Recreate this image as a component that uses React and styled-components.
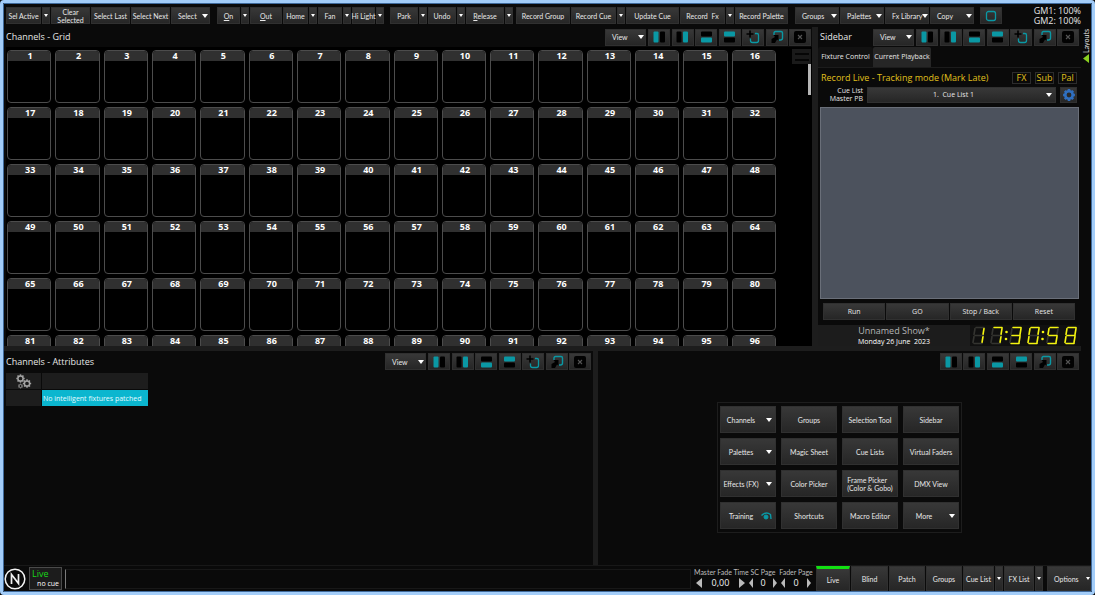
import React from "react";
import styled, { createGlobalStyle, css } from "styled-components";

const Global = createGlobalStyle`
  * { box-sizing: border-box; }
  html, body, #root { height: 100%; margin: 0; }
  body { background: #0a0a0a; color: #e6e6e6; font-family: "Open Sans", "Noto Sans", sans-serif; font-size: 7px; }
  button, select, input { font: inherit; color: inherit; margin: 0; }
  button { cursor: pointer; }
  h2 { margin: 0; font-weight: 400; }
`;

const Shell = styled.div`
  height: 100%;
  min-height: 480px;
  display: flex;
  flex-direction: column;
  border: 3px solid #a3cdf9;
  border-radius: 4px;
  outline: 1px solid #3f6a9c;
  outline-offset: -4px;
  padding: 1px;
  overflow: hidden;
`;

const Toolbar = styled.header`
  display: flex;
  align-items: center;
  flex: none;
  height: 23px;
  padding: 0 10px 0 2px;
`;

const Group = styled.div`
  display: flex;
  gap: 1px;
  margin-right: ${(p) => p.$after || 0}px;
`;

const face = css`
  background: linear-gradient(#383838, #262626);
  border: 1px solid #303030;
  color: #e8e8e8;
  font-family: Lato, "Open Sans", sans-serif;
  font-size: 7px;
  line-height: 8px;
  padding: 0;
`;

const Button = styled.button`
  ${face}
  width: ${(p) => p.$w}px;
  height: ${(p) => p.$h || 17}px;
  display: flex;
  align-items: center;
  justify-content: ${(p) => (p.$menu ? "space-between" : "center")};
  padding: ${(p) => (p.$menu ? "0 1px 0 6px" : "0")};
  text-align: center;
  flex: none;
  white-space: pre;
`;

const Caret = styled.span`
  width: 0;
  height: 0;
  flex: none;
  border: ${(p) => (p.$small ? 2 : 3)}px solid transparent;
  border-top: ${(p) => (p.$small ? 3 : 4)}px solid #fff;
  border-bottom: 0;
`;

const Masters = styled.div`
  margin-left: auto;
  font-size: 9px;
  line-height: 10px;
  text-align: right;
  white-space: pre;
`;

const Upper = styled.div`
  flex: 319 1 0;
  min-height: 0;
  display: flex;
`;

const Lower = styled.div`
  flex: 214 1 0;
  min-height: 0;
  display: flex;
`;

const Divider = styled.div`
  height: 5px;
  flex: none;
  background: #1d1d1d;
  margin-right: 10px;
`;

const Panel = styled.section`
  flex: ${(p) => p.$share} 1 0;
  min-width: 0;
  display: flex;
  flex-direction: column;
`;

const PanelHead = styled.div`
  display: flex;
  align-items: center;
  gap: 2px;
  height: ${(p) => p.$h || 20}px;
  flex: none;
  padding: 0 ${(p) => p.$right || 0}px 0 2px;
`;

const Title = styled.h2`
  font-size: 9px;
  line-height: 12px;
  margin-right: auto;
  white-space: nowrap;
`;

const ToolSet = styled.div`
  width: ${(p) => p.$w}px;
  flex: none;
  display: flex;
  justify-content: space-between;
`;

const ToolButton = styled.button`
  ${face}
  width: 22px;
  height: 17px;
  display: grid;
  place-items: center;
  flex: none;
`;

const GridBody = styled.div`
  flex: 1;
  min-height: 0;
  display: flex;
  background: #000;
  margin-left: 2px;
  overflow: hidden;
`;

const Channels = styled.div`
  flex: 1;
  display: grid;
  grid-template-columns: repeat(16, 1fr);
  grid-auto-rows: 53px;
  gap: 4px;
  padding: 3px 16px 0 1px;
`;

const Channel = styled.div`
  border: 1px solid #4c4c4c;
  border-radius: 4px;
  overflow: hidden;
`;

const ChannelNumber = styled.div`
  background: #303030;
  font-size: 9px;
  line-height: 10px;
  font-weight: 700;
  text-align: center;
  padding-left: 2px;
  color: #fff;
`;

const Rail = styled.div`
  width: 20px;
  flex: none;
  display: flex;
  flex-direction: column;
  align-items: flex-end;
  padding: 2px 1px 0 0;
`;

const Grip = styled.button`
  width: 19px;
  height: 15px;
  border: 0;
  padding: 0;
  background: #1a1a1a;
  display: grid;
  place-items: center;
`;

const Thumb = styled.div`
  width: 3px;
  height: 31px;
  background: #b5b5b5;
`;

const Splitter = styled.div`
  width: ${(p) => p.$w || 5}px;
  flex: none;
  background: #1d1d1d;
`;

const Sidebar = styled.aside`
  flex: 263 1 0;
  min-width: 0;
  display: flex;
  flex-direction: column;
`;

const Tabs = styled.div`
  display: flex;
  align-items: flex-end;
  height: 20px;
  flex: none;
`;

const Tab = styled.button`
  height: 20px;
  width: ${(p) => p.$w}px;
  border: 0;
  padding: 0;
  font-size: 7px;
  line-height: 10px;
  white-space: nowrap;
  border-radius: 2px 2px 0 0;
  background: ${(p) => (p.$on ? "#262626" : "#111")};
`;

const Mode = styled.div`
  display: flex;
  align-items: center;
  gap: 4px;
  height: 20px;
  flex: none;
  border-top: 1px solid #1c1c1c;
  padding: 0 4px 0 3px;
  color: #e0c01c;
`;

const ModeText = styled.span`
  font-size: 9px;
  line-height: 12px;
  margin-right: auto;
  white-space: nowrap;
`;

const ModeFlag = styled.button`
  width: 19px;
  height: 12px;
  padding: 0;
  background: #0a0a0a;
  border: 1px solid #2c2c2c;
  font-size: 9px;
  line-height: 10px;
`;

const CueRow = styled.div`
  display: flex;
  align-items: flex-start;
  gap: 4px;
  height: 20px;
  flex: none;
  padding: 0 4px 0 3px;
`;

const CueLabel = styled.label`
  width: 42px;
  font-size: 7px;
  line-height: 8px;
  text-align: right;
`;

const SelectWrap = styled.div`
  flex: 1;
  display: flex;
  position: relative;
  align-items: center;

  & > span { position: absolute; right: 4px; pointer-events: none; }
`;

const Select = styled.select`
  ${face}
  font-family: "Open Sans", "Noto Sans", sans-serif;
  appearance: none;
  width: 100%;
  height: 16px;
  text-align: center;
  text-align-last: center;
  padding-right: 16px;
`;

const CueArea = styled.div`
  flex: 1;
  min-height: 0;
  margin: 0 2px 0 2px;
  background: #4c525d;
  border: 1px solid #6a6f79;
`;

const Transport = styled.div`
  display: flex;
  gap: 1px;
  padding: 4px 6px 5px 5px;
  flex: none;

  & > button { flex: 1; width: auto; font-family: "Open Sans", "Noto Sans", sans-serif; }
`;

const Status = styled.div`
  display: flex;
  height: 21px;
  flex: none;
  background: #1c1c1c;
  margin-right: 1px;
`;

const Show = styled.div`
  flex: 1;
  text-align: center;
  white-space: pre;
  font-size: 9px;
  line-height: 12px;
  color: #b4b4b4;

  & > time { display: block; font-size: 7px; line-height: 9px; color: #fff; }
`;

const Clock = styled.svg`
  width: 110px;
  height: 21px;
  background: #101010;
  flex: none;
`;

const Layouts = styled.button`
  width: 10px;
  flex: none;
  border: 0;
  padding: 2px 0 0;
  background: none;
  display: flex;
  flex-direction: column;
  align-items: center;
  font-size: 7px;
  line-height: 8px;
  gap: 1px;

  & > span { writing-mode: vertical-rl; transform: rotate(180deg); font-family: Lato, sans-serif; }
`;

const AttrTable = styled.table`
  border-collapse: separate;
  border-spacing: 1px;
  margin: 0 0 0 1px;
  width: 144px;
  table-layout: fixed;

  th, td { height: 16px; padding: 1px 0 0 1px; background: #1d1d1d; font-size: 7px; line-height: 10px; font-weight: 400; text-align: left; white-space: nowrap; }
  th:first-child { width: 35px; text-align: center; padding: 0; }
  td:last-child { background: #0bb6cf; color: #e4fbff; }
  svg { display: block; margin: 0 auto; }
`;

const Centre = styled.div`
  flex: 1;
  display: flex;
  align-items: center;
  justify-content: center;
  padding: 0 10px 2px 0;
`;

const Launcher = styled.div`
  display: grid;
  grid-template-columns: repeat(4, 56px);
  gap: 5px;
  padding: 3px 2px;
  border: 1px solid #1d1d1d;
  white-space: pre;

  & > button { width: 56px; height: 27px; position: relative; }
`;

const Labelled = styled.span`
  padding-right: ${(p) => (p.$shift ? 14 : 0)}px;
  text-align: left;
`;

const Mark = styled.span`
  position: absolute;
  right: 3px;
  top: 0;
  bottom: 0;
  display: flex;
  align-items: center;
`;

const CommandBar = styled.footer`
  display: flex;
  height: 26px;
  flex: none;
  align-items: center;
  border-top: 1px solid #181818;
`;

const LiveBox = styled.div`
  width: 33px;
  height: 23px;
  margin: 0 3px 0 3px;
  padding: 1px 2px;
  border: 1px solid #4a4a4a;
  background: #1c1c1c;
  font-size: 9px;
  line-height: 10px;
  color: #18d818;

  & > small { display: block; font-size: 7px; line-height: 9px; text-align: right; color: #fff; }
`;

const Command = styled.input`
  flex: 1;
  min-width: 0;
  height: 20px;
  padding: 0;
  background: #0a0a0a;
  border: 1px solid #181818;
  border-left: 1px solid #7a7a7a;
  margin-right: 3px;
`;

const Stepper = styled.div`
  width: ${(p) => p.$w}px;
  font-family: Lato, sans-serif;
  font-size: 7px;
  line-height: 8px;
  text-align: center;
  white-space: nowrap;
  color: #bcbcbc;
`;

const StepRow = styled.div`
  display: flex;
  align-items: center;
  justify-content: space-between;
  padding: 0 2px;
  font-family: "Open Sans", sans-serif;
  font-size: 9px;
  line-height: 13px;
  color: #f2f2f2;

  & > button { border: 0; padding: 0; background: none; display: flex; }
`;

const Views = styled.nav`
  display: flex;
  gap: 1px;
  height: 25px;
  margin-left: 3px;
`;

const ViewButton = styled.button`
  ${face}
  width: ${(p) => p.$w}px;
  display: flex;
  align-items: center;
  justify-content: ${(p) => (p.$menu ? "space-between" : "center")};
  padding: ${(p) => (p.$menu ? "0 0 0 6px" : "0")};
  border-top: ${(p) => (p.$on ? "3px solid #12e012" : "1px solid #303030")};
  margin-left: ${(p) => p.$gap || 0}px;
`;

const teal = "#0a98a4";

function Icon({ kind }) {
  if (kind === "left" || kind === "right") {
    const l = kind === "left";
    return (
      <svg width="13" height="12" viewBox="0 0 13 12">
        <rect x="0.5" y="0.5" width="5" height="11" rx="1" fill={l ? teal : "#000"} />
        <rect x="7" y="0.5" width="5" height="11" rx="1" fill={l ? "#000" : teal} />
      </svg>
    );
  }
  if (kind === "bottom" || kind === "top") {
    const t = kind === "top";
    return (
      <svg width="13" height="12" viewBox="0 0 13 12">
        <rect x="1" y="0.5" width="11" height="5" rx="1" fill={t ? teal : "#000"} />
        <rect x="1" y="6.5" width="11" height="5" rx="1" fill={t ? "#000" : teal} />
      </svg>
    );
  }
  if (kind === "add") {
    return (
      <svg width="14" height="14" viewBox="0 0 14 14" fill="none">
        <path d="M9 3.500h2q1.500 0 1.500 1.500v5.500q0 2-2 2h-4q-2 0-2-2V8.500" stroke={teal} strokeWidth="1.300" />
        <path d="M0.500 4h7M4 0.500v7" stroke="#000" strokeWidth="1.600" />
      </svg>
    );
  }
  if (kind === "pop") {
    return (
      <svg width="14" height="14" viewBox="0 0 14 14" fill="none">
        <path d="M4 5V3q0-1.500 1.500-1.500h5.500q1.500 0 1.500 1.500v5q0 2-2 2H9" stroke={teal} strokeWidth="1.400" />
        <path d="M8.500 5v5.500l-1.500-1L5 13H1.500V9L5 7 3.500 5z" fill="#000" />
      </svg>
    );
  }
  return (
    <svg width="12" height="12" viewBox="0 0 12 12">
      <rect width="12" height="12" rx="2" fill="#020202" />
      <path d="M4 4l4 4M8 4l-4 4" stroke="#555" strokeWidth="1.100" />
    </svg>
  );
}

const ICON_NAMES = { left: "Dock left", right: "Dock right", bottom: "Dock bottom", top: "Dock top", add: "New window", pop: "Pop out", close: "Close" };

function Tools({ w = 163, kinds = ["left", "right", "bottom", "top", "add", "pop", "close"] }) {
  return (
    <ToolSet $w={w}>
      {kinds.map((k) => (
        <ToolButton key={k} aria-label={ICON_NAMES[k]}>
          <Icon kind={k} />
        </ToolButton>
      ))}
    </ToolSet>
  );
}

function Gear({ cx, cy, r, color, hole = "#1d1d1d", width = 1.2 }) {
  const teeth = Array.from({ length: 8 }, (_, i) => (i * Math.PI) / 4);
  return (
    <g stroke={color} fill="none" strokeWidth={width}>
      {teeth.map((a) => (
        <line key={a} x1={cx + r * Math.cos(a)} y1={cy + r * Math.sin(a)} x2={cx + r * 1.6 * Math.cos(a)} y2={cy + r * 1.6 * Math.sin(a)} />
      ))}
      <circle cx={cx} cy={cy} r={r} fill={hole} />
    </g>
  );
}

const SEGMENTS = {
  a: [3, 1, 11, 1], b: [11, 2, 10, 8], c: [10, 10, 9, 16], d: [1, 17, 9, 17],
  e: [1, 10, 0, 16], f: [2, 2, 1, 8], g: [2, 9, 10, 9],
};
const LIT = { 0: "abcdef", 1: "bc", 3: "abcdg", 5: "acdfg", 7: "abc", 8: "abcdefg" };

function ClockFace() {
  const digits = [[3, 1], [21, 7], [40, 3], [58, 0], [77, 5], [95, 8]];
  return (
    <Clock viewBox="0 0 110 21" role="img" aria-label="17:30:58">
      {digits.map(([x, n]) => (
        <g key={x} transform={`translate(${x} 1.5)`} strokeWidth="1.6" strokeLinecap="round">
          {Object.entries(SEGMENTS).map(([k, [x1, y1, x2, y2]]) => (
            <line key={k} x1={x1} y1={y1} x2={x2} y2={y2} stroke={LIT[n].includes(k) ? "#f4f410" : "#343430"} />
          ))}
        </g>
      ))}
      {[36, 72.5].map((x) => (
        <g key={x} fill="#f4f410">
          <circle cx={x + 0.5} cy="7" r="1.300" />
          <circle cx={x} cy="14" r="1.300" />
        </g>
      ))}
    </Clock>
  );
}

const BAR = [
  { after: 7, items: [["Sel Active", 35, "split"], ["Clear\nSelected", 39], ["Select Last", 39], ["Select Next", 39], ["Select", 39, "menu"]] },
  { after: 6, items: [[<><u>O</u>n</>, 23, "split"], [<><u>O</u>ut</>, 32], ["Home", 25, "split"], ["Fan", 24, "split"], ["Hi Light", 23, "split"]] },
  { after: 3, items: [["Park", 28, "split"], ["Undo", 28, "split"], [<><u>R</u>elease</>, 38, "split"]] },
  { after: 7, items: [["Record Group", 54], ["Record Cue", 45, "split"], ["Update Cue", 53], ["Record  Fx", 45, "split"], ["Record Palette", 53]] },
  { after: 6, items: [["Groups", 44, "menu"], ["Palettes", 44, "menu"], ["Fx Library", 44, "menu"], ["Copy", 44, "menu"]] },
];

const LAUNCH = [
  ["Channels", "menu"], ["Groups"], ["Selection Tool"], ["Sidebar"],
  ["Palettes", "menu"], ["Magic Sheet"], ["Cue Lists"], ["Virtual Faders"],
  ["Effects (FX)", "menu"], ["Color Picker"], ["Frame Picker\n(Color & Gobo)"], ["DMX View"],
  ["Training", "eye"], ["Shortcuts"], ["Macro Editor"], ["More", "menu"],
];

function Step({ label, value, w, thin }) {
  const tip = thin ? 4 : 6;
  return (
    <Stepper $w={w}>
      {label}
      <StepRow>
        <button aria-label={`${label} down`}>
          <svg width={tip} height="10" viewBox={`0 0 ${tip} 10`}><path d={`M${tip} 0v10L0 5z`} fill="#bbb" /></svg>
        </button>
        {value}
        <button aria-label={`${label} up`}>
          <svg width={tip} height="10" viewBox={`0 0 ${tip} 10`}><path d={`M0 0v10L${tip} 5z`} fill="#bbb" /></svg>
        </button>
      </StepRow>
    </Stepper>
  );
}

export default function App() {
  return (
    <Shell>
      <Global />
      <Toolbar>
        {BAR.map((g, i) => (
          <Group key={i} $after={g.after}>
            {g.items.map(([label, w, kind], j) => (
              <React.Fragment key={j}>
                <Button $w={w} $menu={kind === "menu"}>
                  <span>{label}</span>
                  {kind === "menu" && <Caret />}
                </Button>
                {kind === "split" && (
                  <Button $w={8} aria-label="More options"><Caret $small /></Button>
                )}
              </React.Fragment>
            ))}
          </Group>
        ))}
        <Button $w={22} aria-label="Window frame">
          <svg width="12" height="12" viewBox="0 0 12 12"><rect x="1.500" y="1.500" width="9" height="9" rx="2" fill="none" stroke={teal} strokeWidth="1.300" /></svg>
        </Button>
        <Masters>{"GM1: 100%\nGM2: 100%"}</Masters>
      </Toolbar>

      <Upper>
        <Panel $share={808}>
          <PanelHead $right={1}>
            <Title>Channels - Grid</Title>
            <Button $w={41} $menu><span>View</span><Caret /></Button>
            <Tools />
          </PanelHead>
          <GridBody>
            <Channels>
              {Array.from({ length: 96 }, (_, i) => (
                <Channel key={i}><ChannelNumber>{i + 1}</ChannelNumber></Channel>
              ))}
            </Channels>
            <Rail>
              <Grip aria-label="Grid menu">
                <svg width="14" height="8" viewBox="0 0 14 8"><path d="M0 1h14M0 7h14" stroke="#000" strokeWidth="1.500" /></svg>
              </Grip>
              <Thumb />
            </Rail>
          </GridBody>
        </Panel>
        <Splitter $w={6} />
        <Sidebar>
          <PanelHead $right={2}>
            <Title>Sidebar</Title>
            <Button $w={41} $menu><span>View</span><Caret /></Button>
            <Tools />
          </PanelHead>
          <Tabs>
            <Tab $w={55}>Fixture Control</Tab>
            <Tab $w={58} $on>Current Playback</Tab>
          </Tabs>
          <Mode>
            <ModeText>Record Live - Tracking mode (Mark Late)</ModeText>
            <ModeFlag>FX</ModeFlag>
            <ModeFlag>Sub</ModeFlag>
            <ModeFlag>Pal</ModeFlag>
          </Mode>
          <CueRow>
            <CueLabel htmlFor="cue">Cue List Master PB</CueLabel>
            <SelectWrap>
              <Select id="cue"><option>{"1.\u00a0 Cue List 1"}</option></Select>
              <Caret />
            </SelectWrap>
            <Button $w={17} $h={16} aria-label="Cue list settings">
              <svg width="14" height="14" viewBox="0 0 14 14"><Gear cx={7} cy={7} r={3.7} color="#2f6fc0" hole="#2a2a2a" width={2.6} /></svg>
            </Button>
          </CueRow>
          <CueArea />
          <Transport>
            <Button>Run</Button><Button>GO</Button><Button>Stop / Back</Button><Button>Reset</Button>
          </Transport>
          <Status>
            <Show>Unnamed Show*<time>{"Monday 26 June  2023"}</time></Show>
            <ClockFace />
          </Status>
        </Sidebar>
        <Layouts>
          <span>Layouts</span>
          <svg width="6" height="9" viewBox="0 0 6 9"><path d="M6 0v9L0 4.500z" fill="#8ad020" /></svg>
        </Layouts>
      </Upper>
      <Divider />
      <Lower>
        <Panel $share={589}>
          <PanelHead $h={21} $right={2}>
            <Title>Channels - Attributes</Title>
            <Button $w={41} $menu><span>View</span><Caret /></Button>
            <Tools />
          </PanelHead>
          <AttrTable>
            <thead>
              <tr>
                <th aria-label="Settings">
                  <svg width="17" height="15" viewBox="0 0 17 15">
                    <Gear cx={5.5} cy={4.5} r={2.6} color="#a4a4a4" width={1.5} />
                    <Gear cx={12} cy={9.5} r={2.6} color="#a4a4a4" width={1.5} />
                    <Gear cx={5.5} cy={12} r={1.5} color="#8c8c8c" width={1} />
                  </svg>
                </th>
                <th />
              </tr>
            </thead>
            <tbody>
              <tr><td /><td>No intelligent fixtures patched</td></tr>
            </tbody>
          </AttrTable>
        </Panel>
        <Splitter />
        <Panel $share={493}>
          <PanelHead $h={21} $right={12}>
            <Title />
            <Tools w={139} kinds={["left", "right", "bottom", "top", "pop", "close"]} />
          </PanelHead>
          <Centre>
            <Launcher>
              {LAUNCH.map(([label, kind]) => (
                <Button key={label}>
                  <Labelled $shift={kind}>{label}</Labelled>
                  {kind && (
                    <Mark>
                      {kind === "menu" ? <Caret /> : (
                        <svg width="11" height="10" viewBox="0 0 11 10" fill="none" stroke={teal}>
                          <path d="M0.500 4.500Q5 0 9.500 3.500L10 8" strokeWidth="1.400" />
                          <circle cx="5" cy="6" r="2" fill={teal} />
                        </svg>
                      )}
                    </Mark>
                  )}
                </Button>
              ))}
            </Launcher>
          </Centre>
        </Panel>
      </Lower>

      <CommandBar>
        <svg width="22" height="22" viewBox="0 0 22 22" fill="none" stroke="#f2f2f2" aria-label="N">
          <circle cx="11" cy="11" r="9.800" strokeWidth="1.500" />
          <polyline points="7.500,16 7.500,6.500 14.500,15.500 14.500,6" strokeWidth="1.700" />
        </svg>
        <LiveBox>Live<small>no cue</small></LiveBox>
        <Command aria-label="Command line" />
        <Step label="Master Fade Time" value="0,00" w={53} />
        <Step label="SC Page" value="0" w={32} thin />
        <Step label="Fader Page" value="0" w={34} thin />
        <Views>
          <ViewButton $w={34} $on>Live</ViewButton>
          <ViewButton $w={37}>Blind</ViewButton>
          <ViewButton $w={36}>Patch</ViewButton>
          <ViewButton $w={36}>Groups</ViewButton>
          <ViewButton $w={31}>Cue List</ViewButton>
          <ViewButton $w={8} aria-label="Cue list options"><Caret $small /></ViewButton>
          <ViewButton $w={30}>FX List</ViewButton>
          <ViewButton $w={8} aria-label="FX list options"><Caret $small /></ViewButton>
          <ViewButton $w={44} $menu $gap={3}>Options<Caret $small /></ViewButton>
        </Views>
      </CommandBar>
    </Shell>
  );
}
